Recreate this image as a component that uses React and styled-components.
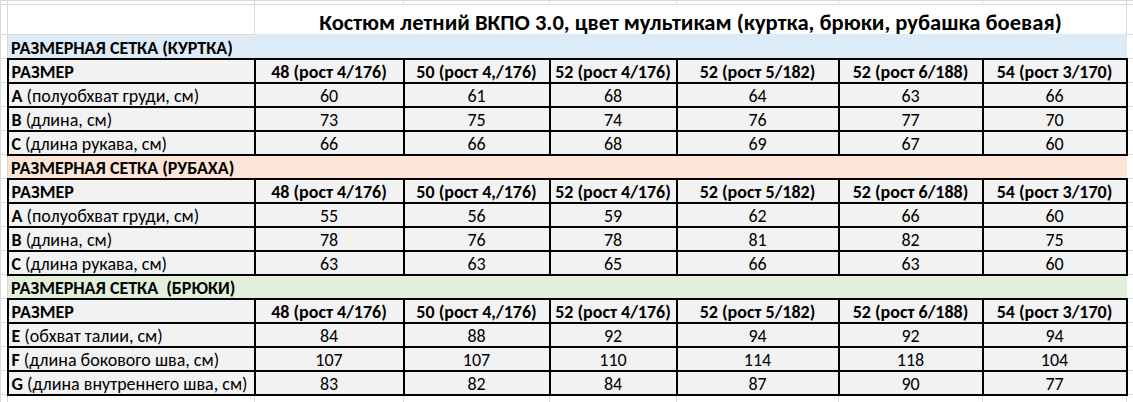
import React from "react";
import styled, { createGlobalStyle, css } from "styled-components";

const Global = createGlobalStyle`
  html, body { margin: 0; padding: 0; background: #fff; }
  body { font-family: Carlito, Calibri, "Open Sans", "Noto Sans", sans-serif; color: #000; }
`;

const Sheet = styled.table`
  border-collapse: collapse;
  table-layout: fixed;
  width: 1133px;
`;

const Row = styled.tr`
  height: ${(p) => p.$h || 24}px;
`;

const Cell = styled.td`
  border: 1px solid #dadada;
  padding: 3px 3px 0;
  font-size: 18px;
  line-height: 18px;
  white-space: nowrap;
  overflow: hidden;
  text-align: ${(p) => p.$align || "left"};
  font-weight: ${(p) => (p.$bold ? 700 : 400)};
  ${(p) =>
    p.$data &&
    css`
      border: 2px solid #000;
      background: #f2f2f2;
    `}
  ${(p) =>
    p.$band &&
    css`
      background: ${p.$band};
      border-color: ${p.$band};
      border-bottom: 2px solid #000;
      font-weight: 700;
    `}
`;

const TitleCell = styled.td`
  border: 1px solid #dadada;
  border-bottom: none;
  text-align: center;
  font-weight: 700;
  font-size: 22.6px;
  line-height: 1;
  padding: 6px 0 0;
  white-space: nowrap;
`;

const Letter = styled.b`
  font-weight: 700;
`;

const widths = [7, 247, 149, 146, 127, 162, 144, 144, 7];
const sizes = [
  "48 (рост 4/176)",
  "50 (рост 4,/176)",
  "52 (рост 4/176)",
  "52 (рост 5/182)",
  "52 (рост 6/188)",
  "54 (рост 3/170)",
];

const sections = [
  {
    title: "РАЗМЕРНАЯ СЕТКА (КУРТКА)",
    color: "#ddebf7",
    rows: [
      ["A", " (полуобхват груди, см)", [60, 61, 68, 64, 63, 66]],
      ["B", " (длина, см)", [73, 75, 74, 76, 77, 70]],
      ["C", " (длина рукава, см)", [66, 66, 68, 69, 67, 60]],
    ],
  },
  {
    title: "РАЗМЕРНАЯ СЕТКА (РУБАХА)",
    color: "#fce4d6",
    rows: [
      ["A", " (полуобхват груди, см)", [55, 56, 59, 62, 66, 60]],
      ["B", " (длина, см)", [78, 76, 78, 81, 82, 75]],
      ["C", " (длина рукава, см)", [63, 63, 65, 66, 63, 60]],
    ],
  },
  {
    title: "РАЗМЕРНАЯ СЕТКА  (БРЮКИ)",
    color: "#e2efda",
    rows: [
      ["E", " (обхват талии, см)", [84, 88, 92, 94, 92, 94]],
      ["F", " (длина бокового шва, см)", [107, 107, 110, 114, 118, 104]],
      ["G", " (длина внутреннего шва, см)", [83, 82, 84, 87, 90, 77]],
    ],
  },
];

const Blank = ({ n = 1 }) =>
  Array.from({ length: n }).map((_, i) => <Cell key={i} />);

export default function App() {
  return (
    <>
      <Global />
      <Sheet>
        <colgroup>
          {widths.map((w, i) => (
            <col key={i} style={{ width: w }} />
          ))}
        </colgroup>
        <tbody>
          <Row $h={4}>
            <Blank n={9} />
          </Row>
          <Row $h={30}>
            <Cell />
            <Cell />
            <TitleCell colSpan={6}>
              Костюм летний ВКПО 3.0, цвет мультикам (куртка, брюки, рубашка боевая)
            </TitleCell>
            <Cell />
          </Row>
          {sections.map((s) => (
            <React.Fragment key={s.title}>
              <Row>
                <Cell />
                <Cell colSpan={7} $band={s.color} style={{ whiteSpace: "pre" }}>
                  {s.title}
                </Cell>
                <Cell />
              </Row>
              <Row>
                <Cell />
                <Cell $data $bold>
                  РАЗМЕР
                </Cell>
                {sizes.map((z) => (
                  <Cell key={z} $data $bold $align="center">
                    {z}
                  </Cell>
                ))}
                <Cell />
              </Row>
              {s.rows.map(([l, label, vals]) => (
                <Row key={l + label}>
                  <Cell />
                  <Cell $data>
                    <Letter>{l}</Letter>
                    {label}
                  </Cell>
                  {vals.map((v, i) => (
                    <Cell key={i} $data $align="center">
                      {v}
                    </Cell>
                  ))}
                  <Cell />
                </Row>
              ))}
            </React.Fragment>
          ))}
          <Row $h={8}>
            <Blank n={9} />
          </Row>
        </tbody>
      </Sheet>
    </>
  );
}
